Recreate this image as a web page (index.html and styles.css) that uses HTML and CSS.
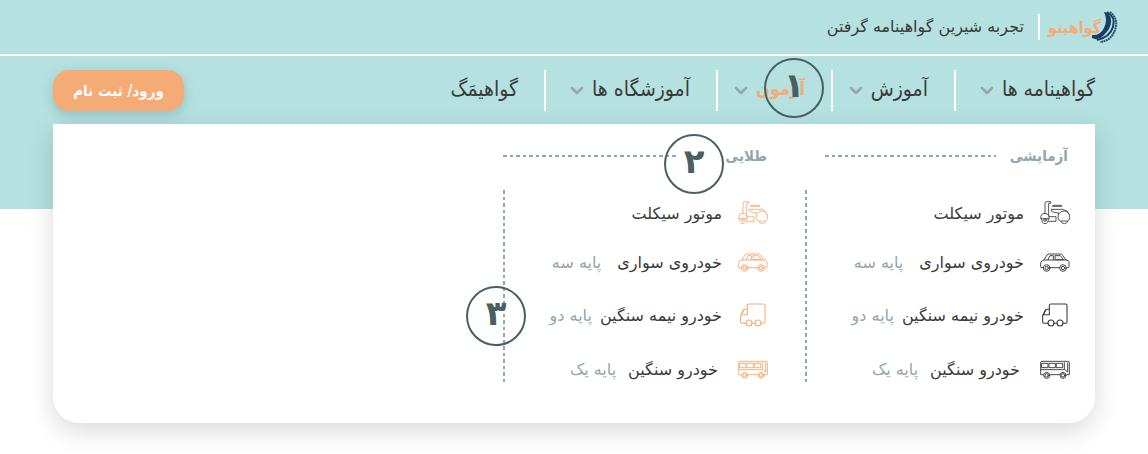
FILE: index.html
```html
<!DOCTYPE html>
<html lang="fa" dir="rtl">
<head>
<meta charset="utf-8">
<meta name="viewport" content="width=device-width, initial-scale=1">
<title>گواهیتو</title>
<link rel="stylesheet" href="styles.css">
</head>
<body>
<svg class="sprite" aria-hidden="true">
  <symbol id="chevron" viewBox="0 0 14 9"><path d="M2 2l5 5 5-5" fill="none" stroke="currentColor" stroke-width="2.6" stroke-linecap="round" stroke-linejoin="round"/></symbol>
  <symbol id="scooter" viewBox="0 0 90 72">
    <g fill="none" stroke="currentColor" stroke-width="2.6" stroke-linejoin="round" stroke-linecap="round">
      <path d="M15 38V7q0-5 5-5h12v5h-6v38"/>
      <path d="M2 52q0-15 13-15 12 0 13 15z"/><path d="M5 53q0 15 10 15t10-15"/><circle cx="15" cy="57" r="4"/>
      <path d="M28 47h20v14H26"/>
      <path d="M40 13h25v3H38z"/><path d="M35 25h34q14 3 18 14M35 25v6q8 5 20 5"/>
      <path d="M57 37q6-7 16-7 16 2 16 19 0 9-6 11H62q-8-2-8-11 0-8 3-12z"/>
      <path d="M63 61q2 7 10 7 8 0 10-7"/>
    </g>
  </symbol>
  <symbol id="car" viewBox="0 0 90 72">
    <g fill="none" stroke="currentColor" stroke-width="2.8" stroke-linejoin="round" stroke-linecap="round">
      <path d="M9 53H3q-1 0-1-3V39q1-7 10-9l9-15q2-3 6-3h35q4 0 6 4l10 14q8 1 9 5v15q0 3-2 3h-5M30 53h29"/>
      <path d="M12 30h66M24 29l6-12h10v12M46 17h15l9 12H47z"/>
      <circle cx="20" cy="54" r="10"/><circle cx="20" cy="54" r="5"/><circle cx="69" cy="54" r="10"/><circle cx="69" cy="54" r="5"/>
    </g>
  </symbol>
  <symbol id="truck" viewBox="0 0 90 72">
    <g fill="none" stroke="currentColor" stroke-width="3.2" stroke-linejoin="round" stroke-linecap="round">
      <path d="M24 61H13q-5 0-5-5V38l7-15q2-4 6-4h7V7q0-4 4-4h45q4 0 4 4v49q0 5-5 5h-6M42 61h9"/>
      <path d="M28 19v16H10l8-15"/><circle cx="33" cy="60" r="9"/><circle cx="60" cy="60" r="9"/>
    </g>
  </symbol>
  <symbol id="bus" viewBox="0 0 90 72">
    <g fill="none" stroke="currentColor" stroke-width="2.8" stroke-linejoin="round" stroke-linecap="round">
      <path d="M10 53H2V17q0-4 4-4h78q4 0 4 4v36h-8M30 53h30"/>
      <path d="M6 19h18v13H6zM28 19h18v13H28zM50 19h18v13H50zM73 17v19l10 9V18M3 38h70"/>
      <circle cx="20" cy="55" r="9"/><circle cx="20" cy="55" r="5"/><circle cx="69" cy="55" r="9"/><circle cx="69" cy="55" r="5"/>
    </g>
  </symbol>
</svg>

<header class="hero">
  <div class="topbar">
    <a class="logo" href="#">
      <svg class="logo-tire" viewBox="0 0 26 32" aria-hidden="true">
        <path d="M12 1Q18 1 19 9T11 25Q6 30 0 27Q-1 26 0 24Q8 25 12 17T12 1Z" fill="#183f63"/>
        <path d="M15 1Q24 6 21 16T5 29" fill="none" stroke="#183f63" stroke-width="2"/>
        <path d="M18 1Q27 8 23 19T8 31" fill="none" stroke="#2c5575" stroke-width="2" stroke-dasharray="2 .5"/>
      </svg>
      <span class="logo-name">گواهیتو</span>
    </a>
    <p class="tagline">تجربه شیرین گواهینامه گرفتن</p>
  </div>

  <div class="navbar">
    <nav aria-label="منوی اصلی">
      <ul class="menu">
        <li class="menu-item"><a href="#">گواهینامه ها</a><svg class="chevron"><use href="#chevron"/></svg></li>
        <li class="menu-item"><a href="#">آموزش</a><svg class="chevron"><use href="#chevron"/></svg></li>
        <li class="menu-item active"><a href="#">آزمون</a><svg class="chevron"><use href="#chevron"/></svg><span class="marker marker-nav">۱</span></li>
        <li class="menu-item"><a href="#">آموزشگاه ها</a><svg class="chevron"><use href="#chevron"/></svg></li>
        <li class="menu-item"><a href="#">گواهیمَگ</a></li>
      </ul>
    </nav>
    <button class="login" type="button">ورود/ ثبت نام</button>
  </div>

  <div class="dropdown">
    <section class="group">
      <h2 class="group-title">آزمایشی</h2>
      <ul class="exams">
        <li><a class="exam" href="#"><svg class="icon"><use href="#scooter"/></svg><span>موتور سیکلت</span></a></li>
        <li><a class="exam" href="#"><svg class="icon"><use href="#car"/></svg><span>خودروی سواری</span><span class="grade">پایه سه</span></a></li>
        <li><a class="exam tight" href="#"><svg class="icon"><use href="#truck"/></svg><span>خودرو نیمه سنگین</span><span class="grade">پایه دو</span></a></li>
        <li><a class="exam wide" href="#"><svg class="icon"><use href="#bus"/></svg><span>خودرو سنگین</span><span class="grade">پایه یک</span></a></li>
      </ul>
    </section>
    <section class="group gold">
      <h2 class="group-title">طلایی</h2>
      <span class="marker marker-title">۲</span>
      <ul class="exams">
        <li><a class="exam" href="#"><svg class="icon"><use href="#scooter"/></svg><span>موتور سیکلت</span></a></li>
        <li><a class="exam" href="#"><svg class="icon"><use href="#car"/></svg><span>خودروی سواری</span><span class="grade">پایه سه</span></a></li>
        <li><a class="exam tight" href="#"><svg class="icon"><use href="#truck"/></svg><span>خودرو نیمه سنگین</span><span class="grade">پایه دو</span></a></li>
        <li><a class="exam wide" href="#"><svg class="icon"><use href="#bus"/></svg><span>خودرو سنگین</span><span class="grade">پایه یک</span></a></li>
      </ul>
      <span class="marker marker-list">۳</span>
    </section>
  </div>
</header>
</body>
</html>
```
FILE: styles.css
```css
:root {
  --teal: #b5e1e1;
  --orange: #f5ab76;
  --ink: #3a3a3a;
  --muted: #93a6ab;
  --marker: #4b5f62;
  --condensed: "DejaVu Sans Condensed", "DejaVu Sans", sans-serif;
}
* { box-sizing: border-box; }
body {
  margin: 0;
  min-height: 100vh;
  background: #fff;
  color: var(--ink);
  font-family: "DejaVu Sans", sans-serif;
  font-size: 16px;
}
a { color: inherit; text-decoration: none; }
ul { list-style: none; margin: 0; padding: 0; }
.sprite { display: none; }

.hero {
  padding-bottom: 31px;
  background: linear-gradient(var(--teal), var(--teal)) top / 100% 209px no-repeat;
}
.topbar {
  display: flex;
  align-items: center;
  height: 56px;
  padding: 0 30px;
  border-bottom: 2px solid #fff;
}
.logo { display: flex; align-items: center; }
.logo-tire { width: 26px; height: 32px; }
.logo-name {
  margin-inline-start: -9px;
  color: var(--orange);
  font: bold 16px var(--condensed);
}
.tagline {
  margin: 0;
  margin-inline-start: 8px;
  padding-inline-start: 14px;
  border-inline-start: 2px solid #fff;
  font-size: 16px;
  line-height: 26px;
}

.navbar {
  display: flex;
  justify-content: space-between;
  margin: 0 53px;
  padding: 14px 0 13px;
}
.menu {
  display: grid;
  grid-template-columns: 141px 123px 115px 172px auto;
}
.menu-item {
  position: relative;
  display: flex;
  align-items: center;
  gap: 8px;
  height: 41px;
  padding-inline-start: 26px;
  padding-bottom: 4px;
  border-inline-end: 2px solid #fff;
  font-family: var(--condensed);
  font-size: 21px;
  white-space: nowrap;
}
.menu-item:first-child { padding-inline-start: 0; }
.menu-item:last-child { border: 0; }
.active a { color: var(--orange); font-size: 18px; font-weight: bold; }
.chevron { width: 14px; height: 9px; margin-top: 4px; flex: none; color: #9aa5ae; }
.login {
  width: 131px;
  height: 41px;
  border: 0;
  border-radius: 16px;
  background: var(--orange);
  box-shadow: 0 4px 12px rgba(60, 90, 90, .25);
  color: #fff;
  font: bold 15px var(--condensed);
}

.dropdown {
  display: flex;
  margin: 0 53px;
  padding: 16px 0 39px;
  border-radius: 0 0 26px 26px;
  background: #fff;
  box-shadow: 0 8px 26px rgba(0, 0, 0, .15);
}
.group { position: relative; width: 290px; }
.group + .group { width: 302px; }
.group-title {
  display: flex;
  align-items: center;
  justify-content: space-between;
  margin: 0 0 18px;
  padding-inline: 27px 20px;
  color: var(--muted);
  font: bold 15px/32px var(--condensed);
}
.group-title::after {
  content: "";
  width: 171px;
  height: 2px;
  background: repeating-linear-gradient(90deg, var(--muted) 0 4px, transparent 4px 7px, var(--muted) 7px 10px, transparent 10px 13px);
}
.gold .group-title { padding-inline: 38px 0; }
.gold .group-title::after { width: 174px; }
.exams {
  display: grid;
  grid-template-rows: 49px 53px 54px 38px;
  padding-inline-start: 25px;
  background: repeating-linear-gradient(var(--muted) 0 4px, transparent 4px 7px, var(--muted) 7px 10px, transparent 10px 13px) left / 2px 100% no-repeat;
}
.gold .exams { padding-inline-start: 37px; }
.exam {
  display: flex;
  align-items: center;
  gap: 16px;
  height: 46px;
  font-size: 16px;
  white-space: nowrap;
}
.tight { gap: 8px; }
.tight .icon { margin-inline-end: 8px; }
.wide { gap: 12px; }
.wide .icon { margin-inline-end: 8px; }
.icon { width: 30px; height: 24px; flex: none; }
.gold .icon { color: var(--orange); }
.grade { color: var(--muted); }

.marker {
  position: absolute;
  display: flex;
  align-items: center;
  justify-content: center;
  width: 60px;
  height: 60px;
  padding-bottom: 6px;
  border: 2px solid var(--marker);
  border-radius: 50%;
  color: var(--marker);
  font: bold 34px/1 "DejaVu Sans", sans-serif;
}
.marker-nav { top: -12px; right: 7px; }
.marker-title { top: -6px; right: 81px; }
.marker-list { top: 146px; left: -37px; }
```
